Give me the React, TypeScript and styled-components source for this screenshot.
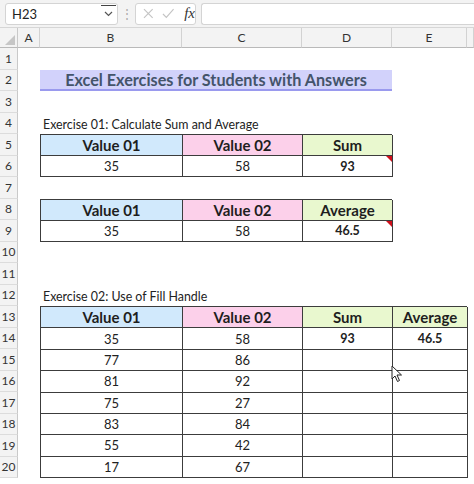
import React from 'react';
import styled, { createGlobalStyle } from 'styled-components';

const FONT = `Lato, "Open Sans", "Liberation Sans", sans-serif`;

const GlobalStyle = createGlobalStyle`
  html, body { margin: 0; padding: 0; background: #fff; }
  body { font-family: ${FONT}; color: #222; }
  * { box-sizing: border-box; }
`;

const Window = styled.div`
  position: relative;
  width: 474px;
  height: 484px;
  overflow: hidden;
  background: #fff;
`;

const FormulaBar = styled.div`
  display: flex;
  align-items: center;
  gap: 0;
  height: 28px;
  padding: 3px 0 3px 5px;
  background: #f3f3f3;
  border-bottom: 1px solid #d6d6d6;
`;

const Box = styled.div`
  height: 22px;
  background: #fff;
  border: 1px solid #d4d4d4;
  border-radius: 3px;
  display: flex;
  align-items: center;
`;

const NameBox = styled(Box)`
  position: relative;
  width: 113px;
  padding-left: 6px;
  font-size: 13px;
  color: #222;
  justify-content: space-between;
`;

const Chevron = styled.span`
  position: relative;
  width: 16px;
  height: 100%;
  display: flex;
  align-items: center;
  justify-content: center;
  margin-right: 1px;
  &::before {
    content: '';
    position: absolute;
    top: 1px;
    left: 1px;
    right: 0;
    height: 1px;
    background: #444;
  }
`;

const Dots = styled.span`
  width: 17px;
  text-align: center;
  color: #aaa;
  font-size: 12px;
  line-height: 1;
`;

const FxBox = styled(Box)`
  width: 61px;
  gap: 8px;
  padding-left: 7px;
`;

const FxText = styled.span`
  font-family: "Liberation Serif", "DejaVu Serif", serif;
  font-style: italic;
  font-size: 15px;
  color: #333;
  margin-left: 2px;
`;

const InputBox = styled(Box)`
  flex: 1;
  margin-left: 5px;
  border-right: none;
  border-radius: 3px 0 0 3px;
`;

const Sheet = styled.div`
  display: grid;
  grid-template-columns: 18px 22px 142px 120px 90px 75px 1fr;
  grid-template-rows: 20px repeat(20, 21.5px);
`;

const Corner = styled.div`
  position: relative;
  background: #f3f3f3;
  border-right: 1px solid #c9c9c9;
  border-bottom: 1px solid #b9b9b9;
  &::after {
    content: '';
    position: absolute;
    right: 2px;
    bottom: 2px;
    border-left: 10px solid transparent;
    border-bottom: 10px solid #c6c6c6;
  }
`;

const ColHead = styled.div`
  background: #f3f3f3;
  border-right: 1px solid #d2d2d2;
  border-bottom: 1px solid #b9b9b9;
  display: flex;
  align-items: center;
  justify-content: center;
  font-size: 12px;
  color: #333;
`;

const RowHead = styled.div<{ $row: number }>`
  grid-column: 1;
  grid-row: ${p => p.$row + 1};
  background: #f3f3f3;
  border-right: 1px solid #c9c9c9;
  border-bottom: 1px solid #dcdcdc;
  display: flex;
  align-items: center;
  justify-content: center;
  font-size: 12px;
  color: #333;
`;

const Title = styled.div`
  grid-row: 3;
  grid-column: 3 / span 3;
  background: #d2d2fb;
  border-bottom: 2px solid #9a9aee;
  display: flex;
  align-items: center;
  justify-content: center;
  font-weight: 700;
  font-size: 16.2px;
  color: #44546a;
`;

const Caption = styled.div<{ $row: number }>`
  grid-row: ${p => p.$row + 1};
  grid-column: 3 / span 4;
  display: flex;
  align-items: flex-end;
  padding: 0 0 2px 3px;
  font-size: 12.4px;
  color: #222;
`;

const Table = styled.div<{ $row: number; $rows: number; $cols: number }>`
  grid-row: ${p => p.$row + 1} / span ${p => p.$rows};
  grid-column: 3 / span ${p => p.$cols};
  display: grid;
  grid-template-columns: ${p => ['142px', '120px', '90px', '75px'].slice(0, p.$cols).join(' ')};
  grid-auto-rows: 1fr;
  border-top: 1px solid #3c3c3c;
  border-left: 1px solid #3c3c3c;
`;

const tones: Record<string, string> = {
  blue: '#d1e9fc',
  pink: '#fcd0ea',
  green: '#e9f8cf',
};

const HeadCell = styled.div<{ $tone: string }>`
  background: ${p => tones[p.$tone]};
  border-right: 1px solid #3c3c3c;
  border-bottom: 1px solid #3c3c3c;
  display: flex;
  align-items: center;
  justify-content: center;
  font-weight: 700;
  font-size: 15px;
  color: #1e1e1e;
`;

const Cell = styled.div<{ $bold?: boolean; $note?: boolean }>`
  position: relative;
  border-right: 1px solid #3c3c3c;
  border-bottom: 1px solid #3c3c3c;
  display: flex;
  align-items: center;
  justify-content: center;
  font-size: ${p => (p.$bold ? '12.5px' : '13px')};
  font-weight: ${p => (p.$bold ? 700 : 400)};
  color: #222;
  ${p => p.$note && `
    &::after {
      content: '';
      position: absolute;
      top: 0;
      right: 0;
      border-left: 6px solid transparent;
      border-top: 6px solid #d0101c;
    }
  `}
`;

const Pointer = styled.svg`
  position: absolute;
  left: 391px;
  top: 365px;
`;

const columns = ['A', 'B', 'C', 'D', 'E', ''];

const fillRows = [
  [35, 58],
  [77, 86],
  [81, 92],
  [75, 27],
  [83, 84],
  [55, 42],
  [17, 67],
];

const App = () => {
  return (
    <Window>
      <GlobalStyle />
      <FormulaBar>
        <NameBox>
          H23
          <Chevron>
            <svg width="9" height="6" viewBox="0 0 9 6">
              <path d="M1 1 L4.5 4.5 L8 1" fill="none" stroke="#555" strokeWidth="1.2" />
            </svg>
          </Chevron>
        </NameBox>
        <Dots>⋮</Dots>
        <FxBox>
          <svg width="11" height="11" viewBox="0 0 11 11">
            <path d="M1 1 L10 10 M10 1 L1 10" stroke="#c4c4c4" strokeWidth="1.2" />
          </svg>
          <svg width="13" height="11" viewBox="0 0 13 11">
            <path d="M1 6 L4.5 9.5 L12 1" fill="none" stroke="#c4c4c4" strokeWidth="1.2" />
          </svg>
          <FxText>fx</FxText>
        </FxBox>
        <InputBox />
      </FormulaBar>

      <Sheet>
        <Corner />
        {columns.map((c, i) => (
          <ColHead key={i}>{c}</ColHead>
        ))}
        {Array.from({ length: 20 }, (_, i) => (
          <RowHead key={i} $row={i + 1}>{i + 1}</RowHead>
        ))}

        <Title>Excel Exercises for Students with Answers</Title>

        <Caption $row={4}>Exercise 01: Calculate Sum and Average</Caption>
        <Table $row={5} $rows={2} $cols={3}>
          <HeadCell $tone="blue">Value 01</HeadCell>
          <HeadCell $tone="pink">Value 02</HeadCell>
          <HeadCell $tone="green">Sum</HeadCell>
          <Cell>35</Cell>
          <Cell>58</Cell>
          <Cell $bold $note>93</Cell>
        </Table>

        <Table $row={8} $rows={2} $cols={3}>
          <HeadCell $tone="blue">Value 01</HeadCell>
          <HeadCell $tone="pink">Value 02</HeadCell>
          <HeadCell $tone="green">Average</HeadCell>
          <Cell>35</Cell>
          <Cell>58</Cell>
          <Cell $bold $note>46.5</Cell>
        </Table>

        <Caption $row={12}>Exercise 02: Use of Fill Handle</Caption>
        <Table $row={13} $rows={8} $cols={4}>
          <HeadCell $tone="blue">Value 01</HeadCell>
          <HeadCell $tone="pink">Value 02</HeadCell>
          <HeadCell $tone="green">Sum</HeadCell>
          <HeadCell $tone="green">Average</HeadCell>
          {fillRows.map(([a, b], i) => (
            <React.Fragment key={i}>
              <Cell>{a}</Cell>
              <Cell>{b}</Cell>
              <Cell $bold>{i === 0 ? '93' : ''}</Cell>
              <Cell $bold>{i === 0 ? '46.5' : ''}</Cell>
            </React.Fragment>
          ))}
        </Table>
      </Sheet>

      <Pointer width="12" height="18" viewBox="0 0 12 18">
        <path d="M1 1 L1 14 L4 11 L6.5 16.5 L8.5 15.5 L6 10 L10.5 10 Z" fill="#fff" stroke="#222" strokeWidth="1" strokeLinejoin="round" />
      </Pointer>
    </Window>
  );
};

export default App;
